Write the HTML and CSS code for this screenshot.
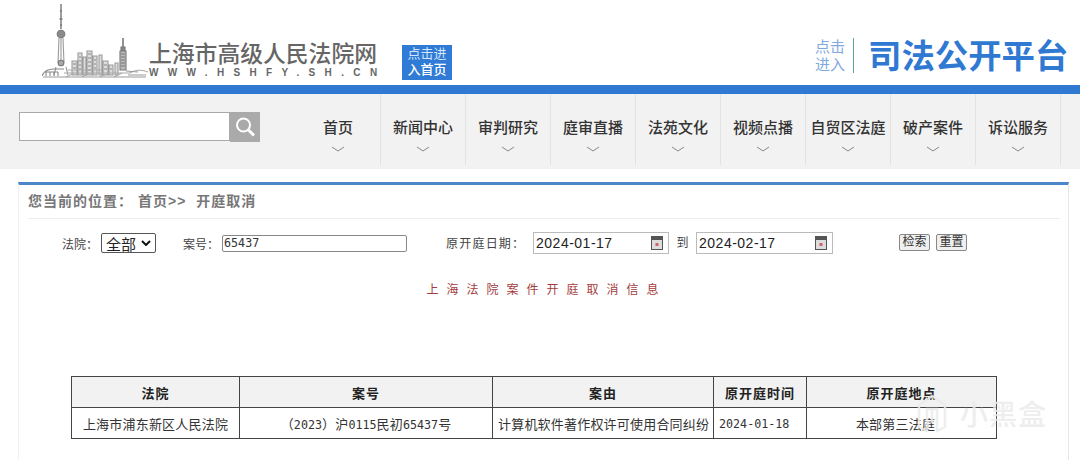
FILE: index.html
```html
<!DOCTYPE html>
<html lang="zh-CN">
<head>
    <meta charset="UTF-8">
    <title>开庭取消</title>
    <link rel="stylesheet" href="styles.css">
</head>
<body>
    <header class="top">
        <div class="logo">
            <svg class="skyline" width="106" height="78" viewBox="0 0 106 78">
                <g fill="none" stroke="#777" stroke-width="1.1">
                    <!-- pearl tower -->
                    <path d="M19 3V28M18 10H20M17.5 18H20.5M18 24H20" stroke-width="1.4"/>
                    <circle cx="19" cy="33" r="3.8" fill="#8a8a8a"/>
                    <path d="M17 37L16 62M21 37L22 62M19 37V60" stroke="#999"/>
                    <circle cx="19" cy="62" r="2.8" fill="#aaa"/>
                    <path d="M14 66L12 74M24 66L26 74" stroke="#999"/>
                    <!-- tall block on the right -->
                    <path d="M81 37V46" stroke-width="1.6"/>
                    <path d="M79 46H83V50H79Z" fill="#888"/>
                    <path d="M78 50H84V69H78Z" fill="#bbb"/>
                    <path d="M79 53H83M79 56H83M79 59H83M79 62H83M79 65H83" stroke="#777"/>
                    <!-- small buildings -->
                    <g stroke="#999" fill="#ddd">
                        <path d="M30 74V60H35V74ZM36 74V52H40V74ZM41 74V56H44V74ZM45 74V50H50V74ZM51 74V55H55V74ZM57 74V54H60V74ZM61 74V60H66V74ZM67 74V64H71V74ZM73 74V62H76V74Z"/>
                    </g>
                    <path d="M31 63H34M31 67H34M37 56H39M37 60H39M37 64H39M37 68H39M46 53H49M46 57H49M46 61H49M46 65H49M46 69H49M52 59H54M52 63H54M52 67H54M62 64H65M62 68H65M68 68H70" stroke="#888"/>
                    <!-- shoreline -->
                    <path d="M0 75C2 69 8 68 12 68H22M3 71H16M4 71V75M8 71V75M12 71V75M16 71V75" stroke="#888"/>
                    <path d="M22 72H78M26 69H60M78 72H88C92 69 100 68 106 71" stroke="#aaa"/>
                    <path d="M84 70L96 71M86 74H104M1 76H104" stroke="#999"/>
                    <path d="M24 76L32 72M40 76L48 72M58 76L66 72M72 76L80 72" stroke="#aaa"/>
                </g>
            </svg>
            <div class="logo-name">
                <div class="logo-title">上海市高级人民法院网</div>
                <div class="logo-url">WWW.HSHFY.SH.CN</div>
            </div>
        </div>
        <a class="home-btn">点击进<br><b>入首页</b></a>
        <a class="open-link">点击<br>进入</a>
        <div class="open-title">司法公开平台</div>
    </header>
    <div class="blue-bar"></div>

    <nav class="nav">
        <div class="search">
            <input class="search-input" type="text">
            <div class="search-btn">
                <svg width="24" height="24" viewBox="0 0 24 24" fill="none" stroke="#fff">
                    <circle cx="10.5" cy="10" r="6.5" stroke-width="2"/>
                    <path d="M15.5 15L21 20.5" stroke-width="3"/>
                </svg>
            </div>
        </div>
        <ul class="menu">
            <li>首页<svg class="arrow" width="14" height="6" viewBox="0 0 14 6"><path d="M1 1L7 5L13 1"/></svg></li>
            <li>新闻中心<svg class="arrow" width="14" height="6" viewBox="0 0 14 6"><path d="M1 1L7 5L13 1"/></svg></li>
            <li>审判研究<svg class="arrow" width="14" height="6" viewBox="0 0 14 6"><path d="M1 1L7 5L13 1"/></svg></li>
            <li>庭审直播<svg class="arrow" width="14" height="6" viewBox="0 0 14 6"><path d="M1 1L7 5L13 1"/></svg></li>
            <li>法苑文化<svg class="arrow" width="14" height="6" viewBox="0 0 14 6"><path d="M1 1L7 5L13 1"/></svg></li>
            <li>视频点播<svg class="arrow" width="14" height="6" viewBox="0 0 14 6"><path d="M1 1L7 5L13 1"/></svg></li>
            <li>自贸区法庭<svg class="arrow" width="14" height="6" viewBox="0 0 14 6"><path d="M1 1L7 5L13 1"/></svg></li>
            <li>破产案件<svg class="arrow" width="14" height="6" viewBox="0 0 14 6"><path d="M1 1L7 5L13 1"/></svg></li>
            <li>诉讼服务<svg class="arrow" width="14" height="6" viewBox="0 0 14 6"><path d="M1 1L7 5L13 1"/></svg></li>
        </ul>
    </nav>

    <main class="panel">
        <div class="crumb">您当前的位置：<span class="crumb-path">首页&gt;&gt;</span><span class="crumb-path">开庭取消</span></div>

        <form class="filter">
            <label class="lbl-court">法院：</label>
            <div class="court-select">全部
                <svg width="10" height="6" viewBox="0 0 10 6"><path d="M1 1L5 5L9 1" fill="none" stroke="#111" stroke-width="2"/></svg>
            </div>
            <label class="lbl-case">案号：</label>
            <input class="case-input" type="text" value="65437">
            <label class="lbl-date">原开庭日期：</label>
            <div class="date-box">2024-01-17
                <svg class="cal" width="12" height="14" viewBox="0 0 12 14"><rect x="0.5" y="0.5" width="11" height="13" fill="#ddd" stroke="#555"/><rect x="1" y="1" width="10" height="3" fill="#555"/><rect x="4.5" y="7" width="3" height="3" fill="#c66"/></svg>
            </div>
            <span class="to">到</span>
            <div class="date-box">2024-02-17
                <svg class="cal" width="12" height="14" viewBox="0 0 12 14"><rect x="0.5" y="0.5" width="11" height="13" fill="#ddd" stroke="#555"/><rect x="1" y="1" width="10" height="3" fill="#555"/><rect x="4.5" y="7" width="3" height="3" fill="#c66"/></svg>
            </div>
            <button class="btn btn-search" type="button">检索</button>
            <button class="btn btn-reset" type="button">重置</button>
        </form>

        <h2 class="list-title">上海法院案件开庭取消信息</h2>

        <table class="result">
            <colgroup>
                <col class="c1"><col class="c2"><col class="c3"><col class="c4"><col class="c5">
            </colgroup>
            <tr>
                <th>法院</th>
                <th>案号</th>
                <th>案由</th>
                <th>原开庭时间</th>
                <th>原开庭地点</th>
            </tr>
            <tr>
                <td>上海市浦东新区人民法院</td>
                <td>（<span class="num">2023</span>）沪<span class="num">0115</span>民初<span class="num">65437</span>号</td>
                <td class="left">计算机软件著作权许可使用合同纠纷</td>
                <td class="left"><span class="num">2024-01-18</span></td>
                <td class="place">本部第三法庭</td>
            </tr>
        </table>
    </main>

    <div class="watermark">
        <svg width="30" height="40" viewBox="0 0 30 40" fill="none" stroke-width="2.5">
            <path d="M2 12L15 3L28 12V34L20 38V16H10V38L2 34Z"/>
            <path d="M15 16V30"/>
        </svg>
        <span>小黑盒</span>
    </div>
</body>
</html>
```

FILE: styles.css
```css
html, body {
    margin: 0;
    height: 460px;
    overflow: hidden;
}

body {
    position: relative;
    background: #fff;
    color: #333;
    font-family: "Liberation Sans", "Noto Sans CJK SC", sans-serif;
    font-size: 12px;
}

/* top */
.top {
    display: flex;
    height: 85px;
    align-items: flex-end;
}

.logo {
    display: flex;
    align-items: flex-end;
    margin-left: 42px;
    margin-bottom: 6px;
}

.skyline {
    display: block;
    filter: blur(0.6px);
}

.logo-name {
    width: 232px;
    margin-left: 1px;
}

.logo-title {
    font-size: 22.8px;
    font-weight: 500;
    line-height: 26px;
    color: #666;
    white-space: nowrap;
}

.logo-url {
    font-size: 10px;
    font-weight: bold;
    line-height: 12px;
    letter-spacing: 9.35px;
    color: #666;
    white-space: nowrap;
}

.home-btn {
    display: block;
    box-sizing: border-box;
    width: 50px;
    height: 35px;
    margin-left: 21px;
    margin-bottom: 5px;
    padding-top: 1px;
    background: #2f7bd6;
    color: #d5e6fa;
    font-size: 13px;
    line-height: 16px;
    text-align: center;
}

.home-btn b {
    color: #fff;
    font-weight: 500;
}

.open-link {
    display: block;
    box-sizing: border-box;
    width: 39px;
    height: 35px;
    margin-left: 363px;
    margin-bottom: 12px;
    border-right: 1px solid #5aa79a;
    color: #7fa9df;
    font-size: 15px;
    line-height: 18px;
}

.open-title {
    margin-left: 14px;
    margin-bottom: 6px;
    color: #3079d3;
    font-size: 33.4px;
    font-weight: 700;
    line-height: 44px;
    white-space: nowrap;
}

.blue-bar {
    height: 9px;
    background: #3079d3;
}

/* nav */
.nav {
    display: flex;
    align-items: flex-start;
    justify-content: space-between;
    height: 75px;
    padding: 0 19px;
    background: #f2f2f2;
}

.search {
    display: flex;
    margin-top: 18px;
}

.search-input {
    box-sizing: border-box;
    width: 211px;
    height: 29px;
    padding: 0 4px;
    border: 1px solid #aaa;
    background: #fff;
    outline: none;
}

.search-btn {
    display: flex;
    align-items: center;
    justify-content: center;
    width: 30px;
    height: 30px;
    background: #aaa;
}

.menu {
    display: flex;
    margin: 0;
    padding: 0;
    list-style: none;
}

.menu li {
    display: flex;
    flex-direction: column;
    align-items: center;
    box-sizing: border-box;
    width: 85px;
    height: 71px;
    padding-top: 23px;
    border-right: 1px solid #e2e2e2;
    color: #333;
    font-size: 15px;
    font-weight: 500;
    line-height: 22px;
    white-space: nowrap;
}

.arrow {
    margin-top: 7px;
    fill: none;
    stroke: #888;
    stroke-width: 1;
}

/* main panel */
.panel {
    box-sizing: border-box;
    width: 1051px;
    height: 278px;
    margin: 13px 0 0 18px;
    padding: 0 8px 0 9px;
    border-top: 3px solid #4a86c8;
    border-left: 1px solid #f0f0f0;
    border-right: 1px solid #e6e6e6;
}

.crumb {
    height: 33px;
    border-bottom: 1px solid #eee;
    color: #777;
    font-size: 14px;
    font-weight: bold;
    line-height: 32px;
    letter-spacing: 1px;
}

.crumb-path {
    margin-left: 5px;
}

.crumb-path + .crumb-path {
    margin-left: 10px;
}

.filter {
    display: flex;
    align-items: center;
    height: 22px;
    margin-top: 13px;
    color: #444;
    font-size: 12px;
}

.lbl-court {
    margin-left: 34px;
    white-space: nowrap;
}

.court-select {
    display: flex;
    align-items: center;
    justify-content: space-between;
    box-sizing: border-box;
    width: 55px;
    height: 20px;
    margin-left: 3px;
    padding: 0 4px 0 4px;
    border: 1px solid #555;
    border-radius: 2px;
    background: #fff;
    color: #222;
    font-size: 15px;
}

.lbl-case {
    margin-left: 27px;
    white-space: nowrap;
}

.case-input {
    box-sizing: border-box;
    width: 185px;
    height: 17px;
    margin-left: 3px;
    padding: 0 1px;
    border: 1px solid #888;
    border-radius: 2px;
    color: #333;
    font-family: "DejaVu Sans Mono", monospace;
    font-size: 11.7px;
    outline: none;
}

.lbl-date {
    width: 87px;
    margin-left: 39px;
    margin-bottom: 2px;
    letter-spacing: 1.2px;
    white-space: nowrap;
}

.date-box {
    display: flex;
    align-items: center;
    justify-content: space-between;
    box-sizing: border-box;
    width: 136px;
    height: 22px;
    padding: 0 5px 0 2px;
    border: 1px solid #bbb;
    color: #222;
    font-size: 14px;
    letter-spacing: 0.5px;
}

.to + .date-box {
    width: 137px;
}

.cal {
    display: block;
}

.to {
    width: 27px;
    margin-top: -3px;
    text-align: center;
}

.btn {
    box-sizing: border-box;
    width: 31px;
    height: 17px;
    margin-bottom: 2px;
    padding: 0;
    border: 1px solid #888;
    border-radius: 2px;
    background: #efefef;
    color: #333;
    font-family: inherit;
    font-size: 12px;
    line-height: 14px;
}

.btn-search {
    margin-left: 66px;
}

.btn-reset {
    margin-left: 6px;
}

.list-title {
    margin: 27px 0 0;
    padding-left: 5px;
    color: #a33c3c;
    font-size: 12px;
    font-weight: 400;
    line-height: 18px;
    letter-spacing: 8px;
    text-align: center;
}

.result {
    width: 925px;
    margin: 77px 0 0 43px;
    border-collapse: collapse;
    table-layout: fixed;
    color: #333;
    font-size: 13px;
    letter-spacing: 0.2px;
}

.c1 { width: 168px; }
.c2 { width: 253px; }
.c3 { width: 221px; }
.c4 { width: 93px; }
.c5 { width: 190px; }

.result th, .result td {
    height: 30px;
    padding: 0;
    border: 1px solid #444;
    text-align: center;
    white-space: nowrap;
}

.result th {
    background: #f2f2f2;
    color: #222;
    font-weight: 700;
    letter-spacing: 1px;
}

.result td.left {
    padding-left: 5px;
    text-align: left;
}

.result td.place {
    padding-right: 12px;
}

.num {
    font-family: "DejaVu Sans Mono", monospace;
    font-size: 11.7px;
    letter-spacing: 0;
}

/* watermark over the table */
.watermark {
    position: absolute;
    left: 917px;
    top: 393px;
    display: flex;
    align-items: center;
    gap: 13px;
}

.watermark svg {
    stroke: rgba(235, 235, 235, 0.85);
}

.watermark span {
    color: rgba(235, 235, 235, 0.85);
    font-size: 28px;
    font-weight: 500;
    letter-spacing: 1px;
}
```
